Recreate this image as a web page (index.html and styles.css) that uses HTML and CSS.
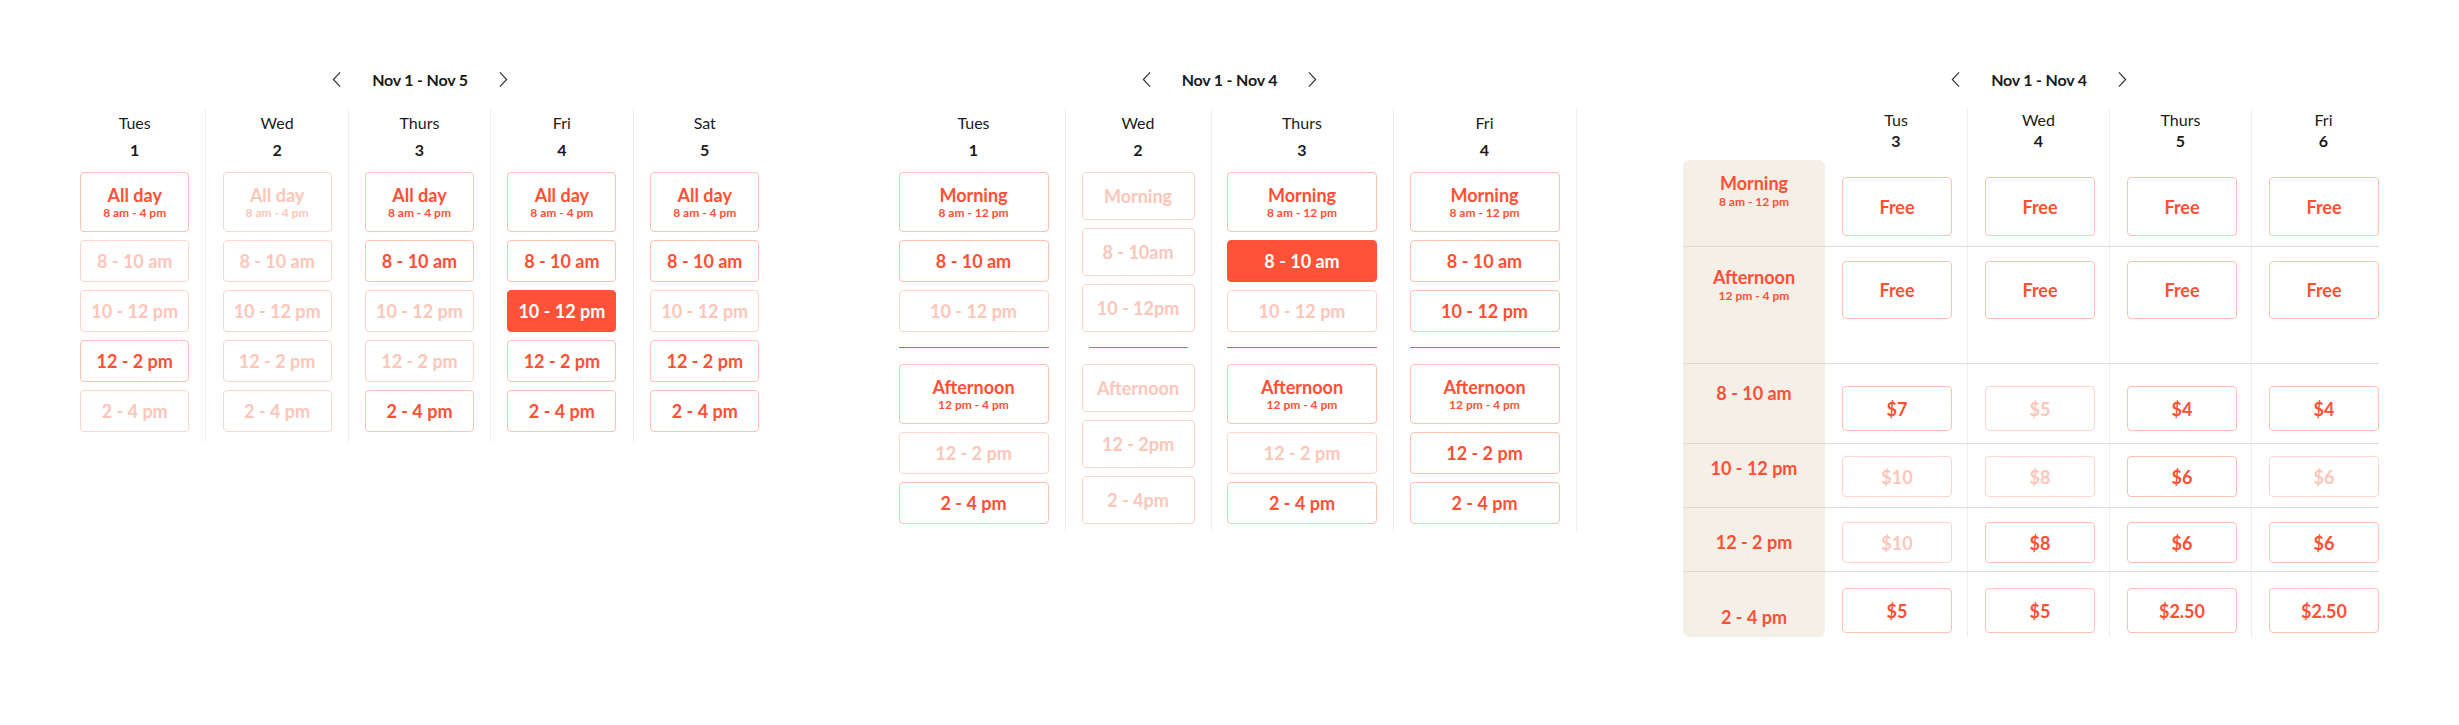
FILE: index.html
```html
<!DOCTYPE html>
<html lang="en">
<head>
    <meta charset="UTF-8">
    <meta name="viewport" content="width=device-width, initial-scale=1.0">
    <title>Pickup slots</title>
    <link rel="stylesheet" href="styles.css">
</head>
<body>
<main class="boards">

    <!-- All day / 2 hour slots -->
    <section class="board">
        <div class="week-nav">
            <svg viewBox="0 0 10 18"><polyline points="9,1 1.5,9 9,17"/></svg>
            <span class="week-range">Nov 1 - Nov 5</span>
            <svg viewBox="0 0 10 18"><polyline points="1,1 8.5,9 1,17"/></svg>
        </div>
        <div class="days days--open-end">
            <div class="day">
                <div class="day-name">Tues</div>
                <div class="day-date">1</div>
                <div class="slots">
                    <div class="slot slot--block">All day<small>8 am - 4 pm</small></div>
                    <div class="slot is-off">8 - 10 am</div>
                    <div class="slot is-off">10 - 12 pm</div>
                    <div class="slot">12 - 2 pm</div>
                    <div class="slot is-off">2 - 4 pm</div>
                </div>
            </div>
            <div class="day">
                <div class="day-name">Wed</div>
                <div class="day-date">2</div>
                <div class="slots">
                    <div class="slot slot--block is-off">All day<small>8 am - 4 pm</small></div>
                    <div class="slot is-off">8 - 10 am</div>
                    <div class="slot is-off">10 - 12 pm</div>
                    <div class="slot is-off">12 - 2 pm</div>
                    <div class="slot is-off">2 - 4 pm</div>
                </div>
            </div>
            <div class="day">
                <div class="day-name">Thurs</div>
                <div class="day-date">3</div>
                <div class="slots">
                    <div class="slot slot--block">All day<small>8 am - 4 pm</small></div>
                    <div class="slot">8 - 10 am</div>
                    <div class="slot is-off">10 - 12 pm</div>
                    <div class="slot is-off">12 - 2 pm</div>
                    <div class="slot">2 - 4 pm</div>
                </div>
            </div>
            <div class="day">
                <div class="day-name">Fri</div>
                <div class="day-date">4</div>
                <div class="slots">
                    <div class="slot slot--block">All day<small>8 am - 4 pm</small></div>
                    <div class="slot">8 - 10 am</div>
                    <div class="slot is-picked">10 - 12 pm</div>
                    <div class="slot">12 - 2 pm</div>
                    <div class="slot">2 - 4 pm</div>
                </div>
            </div>
            <div class="day">
                <div class="day-name">Sat</div>
                <div class="day-date">5</div>
                <div class="slots">
                    <div class="slot slot--block">All day<small>8 am - 4 pm</small></div>
                    <div class="slot">8 - 10 am</div>
                    <div class="slot is-off">10 - 12 pm</div>
                    <div class="slot">12 - 2 pm</div>
                    <div class="slot">2 - 4 pm</div>
                </div>
            </div>
        </div>
    </section>

    <!-- Morning / afternoon split -->
    <section class="board board--split">
        <div class="week-nav">
            <svg viewBox="0 0 10 18"><polyline points="9,1 1.5,9 9,17"/></svg>
            <span class="week-range">Nov 1 - Nov 4</span>
            <svg viewBox="0 0 10 18"><polyline points="1,1 8.5,9 1,17"/></svg>
        </div>
        <div class="days">
            <div class="day day--wide">
                <div class="day-name">Tues</div>
                <div class="day-date">1</div>
                <div class="slots">
                    <div class="slot slot--block">Morning<small>8 am - 12 pm</small></div>
                    <div class="slot">8 - 10 am</div>
                    <div class="slot is-off">10 - 12 pm</div>
                    <div class="split"></div>
                    <div class="slot slot--block">Afternoon<small>12 pm - 4 pm</small></div>
                    <div class="slot is-off">12 - 2 pm</div>
                    <div class="slot">2 - 4 pm</div>
                </div>
            </div>
            <div class="day day--slim">
                <div class="day-name">Wed</div>
                <div class="day-date">2</div>
                <div class="slots">
                    <div class="slot is-off">Morning</div>
                    <div class="slot is-off">8 - 10am</div>
                    <div class="slot is-off">10 - 12pm</div>
                    <div class="split"></div>
                    <div class="slot is-off">Afternoon</div>
                    <div class="slot is-off">12 - 2pm</div>
                    <div class="slot is-off">2 - 4pm</div>
                </div>
            </div>
            <div class="day day--wide">
                <div class="day-name">Thurs</div>
                <div class="day-date">3</div>
                <div class="slots">
                    <div class="slot slot--block">Morning<small>8 am - 12 pm</small></div>
                    <div class="slot is-picked">8 - 10 am</div>
                    <div class="slot is-off">10 - 12 pm</div>
                    <div class="split"></div>
                    <div class="slot slot--block">Afternoon<small>12 pm - 4 pm</small></div>
                    <div class="slot is-off">12 - 2 pm</div>
                    <div class="slot">2 - 4 pm</div>
                </div>
            </div>
            <div class="day day--wide">
                <div class="day-name">Fri</div>
                <div class="day-date">4</div>
                <div class="slots">
                    <div class="slot slot--block">Morning<small>8 am - 12 pm</small></div>
                    <div class="slot">8 - 10 am</div>
                    <div class="slot">10 - 12 pm</div>
                    <div class="split"></div>
                    <div class="slot slot--block">Afternoon<small>12 pm - 4 pm</small></div>
                    <div class="slot">12 - 2 pm</div>
                    <div class="slot">2 - 4 pm</div>
                </div>
            </div>
        </div>
    </section>

    <!-- Price grid -->
    <section class="board">
        <div class="week-nav">
            <svg viewBox="0 0 10 18"><polyline points="9,1 1.5,9 9,17"/></svg>
            <span class="week-range">Nov 1 - Nov 4</span>
            <svg viewBox="0 0 10 18"><polyline points="1,1 8.5,9 1,17"/></svg>
        </div>
        <div class="price-head">
            <div></div>
            <div class="pday"><div class="day-name">Tus</div><div class="day-date">3</div></div>
            <div class="pday"><div class="day-name">Wed</div><div class="day-date">4</div></div>
            <div class="pday"><div class="day-name">Thurs</div><div class="day-date">5</div></div>
            <div class="pday"><div class="day-name">Fri</div><div class="day-date">6</div></div>
        </div>
        <div class="price-table">
            <div class="prow prow--am">
                <div class="plabel">Morning<small>8 am - 12 pm</small></div>
                <div class="pcell"><div class="slot">Free</div></div>
                <div class="pcell"><div class="slot">Free</div></div>
                <div class="pcell"><div class="slot">Free</div></div>
                <div class="pcell"><div class="slot">Free</div></div>
            </div>
            <div class="prow prow--pm">
                <div class="plabel">Afternoon<small>12 pm - 4 pm</small></div>
                <div class="pcell"><div class="slot">Free</div></div>
                <div class="pcell"><div class="slot">Free</div></div>
                <div class="pcell"><div class="slot">Free</div></div>
                <div class="pcell"><div class="slot">Free</div></div>
            </div>
            <div class="prow prow--early">
                <div class="plabel">8 - 10 am</div>
                <div class="pcell"><div class="slot">$7</div></div>
                <div class="pcell"><div class="slot is-off">$5</div></div>
                <div class="pcell"><div class="slot">$4</div></div>
                <div class="pcell"><div class="slot">$4</div></div>
            </div>
            <div class="prow prow--mid">
                <div class="plabel">10 - 12 pm</div>
                <div class="pcell"><div class="slot is-off">$10</div></div>
                <div class="pcell"><div class="slot is-off">$8</div></div>
                <div class="pcell"><div class="slot">$6</div></div>
                <div class="pcell"><div class="slot is-off">$6</div></div>
            </div>
            <div class="prow prow--noon">
                <div class="plabel">12 - 2 pm</div>
                <div class="pcell"><div class="slot is-off">$10</div></div>
                <div class="pcell"><div class="slot">$8</div></div>
                <div class="pcell"><div class="slot">$6</div></div>
                <div class="pcell"><div class="slot">$6</div></div>
            </div>
            <div class="prow prow--late">
                <div class="plabel">2 - 4 pm</div>
                <div class="pcell"><div class="slot">$5</div></div>
                <div class="pcell"><div class="slot">$5</div></div>
                <div class="pcell"><div class="slot">$2.50</div></div>
                <div class="pcell"><div class="slot">$2.50</div></div>
            </div>
        </div>
    </section>

</main>
</body>
</html>
```

FILE: styles.css
```css
* { box-sizing: border-box; }
body { margin: 0; background: #fff; color: #1b1b1b; font-family: Lato, "Open Sans", sans-serif; }

.boards { display: flex; align-items: flex-start; gap: 106.5px; padding: 66px 64px 0; }
.board { flex: none; width: 712px; }
.board--split { width: 694px; }

/* week switcher */
.week-nav { display: flex; justify-content: center; align-items: center; gap: 31px; height: 26px; margin-bottom: 16px; }
.week-nav svg { width: 9px; height: 17px; fill: none; stroke: #333; stroke-width: 1.3; }
.week-range { font-size: 16px; font-weight: 700; letter-spacing: -0.2px; }

/* day columns */
.days { display: flex; }
.day { width: 142.4px; padding: 5px 0 10px; border-right: 1px solid #efefef; text-align: center; }
.days--open-end .day:last-child { border-right: none; }
.day--wide { width: 183px; padding-bottom: 8px; }
.day--slim { width: 146px; padding-bottom: 8px; }
.board--split .day:nth-child(3) { width: 182px; }
.day-name { font-size: 16px; line-height: 20px; }
.day-date { font-size: 16px; font-weight: 700; line-height: 20px; margin-top: 7px; }

.slots { display: flex; flex-direction: column; align-items: center; gap: 8px; margin-top: 12px; }
.slot { display: flex; flex-direction: column; align-items: center; justify-content: center; width: 109px; height: 42px; border: 1px solid #ffc0b1; border-radius: 4px; color: #ff5035; font-size: 18px; font-weight: 700; line-height: 22px; }
.slot small { font-size: 12px; line-height: 14px; }
.slot--block { height: 60px; }
.slot.is-off { color: #fdc6b9; border-color: #fdd5cb; }
.slot.is-picked { background: #ff5238; border-color: #ff5238; color: #fff; }

.day--wide .slot { width: 150px; }
.day--slim .slot { width: 113px; height: 48px; }
.split { width: 150px; height: 1px; margin: 7px 0 8px; background: #ff5a40; }
.day--slim .split { width: 99px; }

/* price grid */
.price-head { display: grid; grid-template-columns: 142px 143px 142px 142px 143px; height: 52px; }
.pday { padding-top: 2px; border-right: 1px solid #efefef; text-align: center; }
.pday:last-child { border-right: none; }
.pday .day-date { margin-top: 1px; }

.price-table { width: 696px; }
.prow { display: grid; grid-template-columns: 142px 143px 142px 142px 127px; height: 64px; border-bottom: 1px solid #dedad5; }
.prow:last-child { border-bottom: none; height: 65px; }
.plabel { display: flex; flex-direction: column; align-items: center; background: #f4efe7; color: #ff5035; font-size: 18px; font-weight: 700; line-height: 22px; }
.plabel small { font-size: 12px; line-height: 16px; }
.prow:first-child .plabel { border-radius: 6px 6px 0 0; }
.prow:last-child .plabel { border-radius: 0 0 6px 6px; }
.pcell { padding-left: 17px; border-right: 1px solid #efefef; }
.pcell:last-child { border-right: none; }
.pcell .slot { width: 110px; height: 41px; }

.prow--am { height: 87px; }
.prow--am .plabel { padding-top: 12px; }
.prow--am .pcell { padding-top: 17px; }
.prow--am .slot { height: 59px; }
.prow--pm { height: 117px; }
.prow--pm .plabel { padding-top: 19px; }
.prow--pm .pcell { padding-top: 14px; }
.prow--pm .slot { height: 58px; }
.prow--early { height: 80px; }
.prow--early .plabel { padding-top: 18px; }
.prow--early .pcell { padding-top: 22px; }
.prow--early .slot { height: 45px; }
.prow--mid .plabel { padding-top: 13px; }
.prow--mid .pcell { padding-top: 12px; }
.prow--noon .plabel { padding-top: 23px; }
.prow--noon .pcell { padding-top: 14px; }
.prow--late .plabel { padding-top: 34px; }
.prow--late .pcell { padding-top: 16px; }
.prow--late .slot { height: 45px; }
```
